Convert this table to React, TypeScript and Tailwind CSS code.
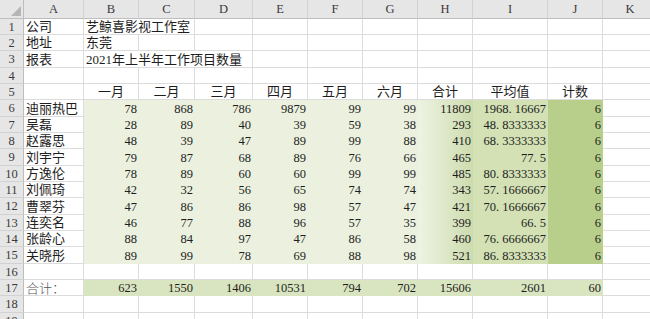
import React from "react";

const COLS =
  "grid grid-cols-[24px_60px_55px_56px_58px_55px_55px_55px_55px_75px_55px_55px]";
const HEIGHTS = ["h-[16px]", "h-[16px]", "h-[17px]"];
const FONT = "font-['Liberation_Serif','Noto_Sans_CJK_SC',serif]";
const CJK = "font-['Noto_Sans_CJK_SC',sans-serif]";

const LIGHT = "bg-[#ebf1de]";
const HGRAD = "bg-[linear-gradient(to_right,#eef3e3,#cddcae)]";
const IFILL = "bg-[#d3e1b5]";
const JFILL = "bg-[#b7cf8a]";
const TOTAL = "bg-[#d9e5c0]";

type Row = [string, number, number, number, number, number, number, number, string, number];

const DATA: Row[] = [
  ["迪丽热巴", 78, 868, 786, 9879, 99, 99, 11809, "1968.16667", 6],
  ["吴磊", 28, 89, 40, 39, 59, 38, 293, "48.8333333", 6],
  ["赵露思", 48, 39, 47, 89, 99, 88, 410, "68.3333333", 6],
  ["刘宇宁", 79, 87, 68, 89, 76, 66, 465, "77.5", 6],
  ["方逸伦", 78, 89, 60, 60, 99, 99, 485, "80.8333333", 6],
  ["刘佩琦", 42, 32, 56, 65, 74, 74, 343, "57.1666667", 6],
  ["曹翠芬", 47, 86, 86, 98, 57, 47, 421, "70.1666667", 6],
  ["连奕名", 46, 77, 88, 96, 57, 35, 399, "66.5", 6],
  ["张龄心", 88, 84, 97, 47, 86, 58, 460, "76.6666667", 6],
  ["关晓彤", 89, 99, 78, 69, 88, 98, 521, "86.8333333", 6],
];

function Num({ v }: { v: string | number }) {
  const s = String(v);
  if (!s.includes(".")) return <span>{s}</span>;
  const [a, b] = s.split(".");
  return (
    <span>
      {a}
      <span className="mr-[0.25em]">.</span>
      {b}
    </span>
  );
}

function Cell({
  children,
  align = "left",
  fill,
  span,
  kind = "num",
  extra = "",
}: {
  children?: React.ReactNode;
  align?: "left" | "center" | "right";
  fill?: string;
  span?: string;
  kind?: "num" | "cjk" | "mixed";
  extra?: string;
}) {
  const a =
    align === "right"
      ? "justify-end pr-[2px]"
      : align === "center"
      ? "justify-center"
      : "justify-start pl-[2px]";
  const f = fill ? fill : "border-r border-b border-[#dcdcdc]";
  const k =
    kind === "num"
      ? "text-[12.5px] pt-[1px]"
      : kind === "cjk"
      ? "text-[13px]"
      : "text-[13px]";
  return (
    <div
      className={`flex items-center whitespace-nowrap leading-none text-[#1e1e1e] ${a} ${f} ${k} ${
        span ?? ""
      } ${extra}`}
    >
      {children}
    </div>
  );
}

function RowNum({ n }: { n: number }) {
  return (
    <div className="flex items-center justify-center bg-[#e6e6e6] border-r border-r-[#bdbdbd] border-b border-b-[#d2d2d2] text-[12.5px] leading-none text-[#3a3a3a] pt-[1px]">
      {n}
    </div>
  );
}

function Blank({ count }: { count: number }) {
  return (
    <>
      {Array.from({ length: count }).map((_, i) => (
        <Cell key={i} />
      ))}
    </>
  );
}

export default function App() {
  const letters = ["A", "B", "C", "D", "E", "F", "G", "H", "I", "J", "K"];
  const h = (n: number) => HEIGHTS[(n - 1) % 3];

  return (
    <div className={`w-[650px] h-[319px] overflow-hidden bg-white ${FONT}`}>
      <div className="w-[658px]">
        {/* header */}
        <div className={`${COLS} h-[19px]`}>
          <div className="relative bg-[#e6e6e6] border-r border-r-[#bdbdbd] border-b border-b-[#bdbdbd]">
            <svg
              className="absolute right-[2px] bottom-[2px]"
              width="10"
              height="10"
              viewBox="0 0 10 10"
            >
              <polygon points="10,0 10,10 0,10" fill="#b5b5b5" />
            </svg>
          </div>
          {letters.map((l) => (
            <div
              key={l}
              className="flex items-center justify-center bg-[#e6e6e6] border-r border-r-[#d2d2d2] border-b border-b-[#bdbdbd] text-[12.5px] leading-none text-[#3a3a3a] pt-[1px]"
            >
              {l}
            </div>
          ))}
        </div>

        {/* row 1 */}
        <div className={`${COLS} ${h(1)}`}>
          <RowNum n={1} />
          <Cell kind="cjk">公司</Cell>
          <Cell kind="cjk" span="col-span-2">
            艺鲸喜影视工作室
          </Cell>
          <Blank count={8} />
        </div>
        {/* row 2 */}
        <div className={`${COLS} ${h(2)}`}>
          <RowNum n={2} />
          <Cell kind="cjk">地址</Cell>
          <Cell kind="cjk">东莞</Cell>
          <Blank count={9} />
        </div>
        {/* row 3 */}
        <div className={`${COLS} ${h(3)}`}>
          <RowNum n={3} />
          <Cell kind="cjk">报表</Cell>
          <Cell kind="mixed" span="col-span-3">
            2021年上半年工作项目数量
          </Cell>
          <Blank count={7} />
        </div>
        {/* row 4 */}
        <div className={`${COLS} ${h(4)}`}>
          <RowNum n={4} />
          <Blank count={11} />
        </div>
        {/* row 5 */}
        <div className={`${COLS} ${h(5)}`}>
          <RowNum n={5} />
          <Cell />
          {["一月", "二月", "三月", "四月", "五月", "六月", "合计", "平均值", "计数"].map(
            (t) => (
              <Cell key={t} kind="cjk" align="center">
                {t}
              </Cell>
            )
          )}
          <Cell />
        </div>

        {/* data rows */}
        {DATA.map((r, i) => {
          const n = 6 + i;
          return (
            <div key={n} className={`${COLS} ${h(n)}`}>
              <RowNum n={n} />
              <Cell kind="cjk" extra="text-[13.5px]">
                {r[0]}
              </Cell>
              {[r[1], r[2], r[3], r[4], r[5], r[6]].map((v, j) => (
                <Cell key={j} align="right" fill={LIGHT}>
                  <Num v={v} />
                </Cell>
              ))}
              <Cell align="right" fill={HGRAD}>
                <Num v={r[7]} />
              </Cell>
              <Cell align="right" fill={IFILL}>
                <Num v={r[8]} />
              </Cell>
              <Cell align="right" fill={JFILL}>
                <Num v={r[9]} />
              </Cell>
              <Cell />
            </div>
          );
        })}

        {/* row 16 */}
        <div className={`${COLS} ${h(16)}`}>
          <RowNum n={16} />
          <Blank count={11} />
        </div>

        {/* row 17 */}
        <div className={`${COLS} ${h(17)}`}>
          <RowNum n={17} />
          <Cell kind="cjk" extra={`${CJK} text-[#555] font-light`}>
            合计：
          </Cell>
          {[623, 1550, 1406, 10531, 794, 702, 15606, 2601, 60].map((v, j) => (
            <Cell key={j} align="right" fill={TOTAL}>
              <Num v={v} />
            </Cell>
          ))}
          <Cell />
        </div>

        {/* row 18 */}
        <div className={`${COLS} ${h(18)}`}>
          <RowNum n={18} />
          <Blank count={11} />
        </div>
        {/* row 19 */}
        <div className={`${COLS} ${h(19)}`}>
          <RowNum n={19} />
          <Blank count={11} />
        </div>
      </div>
    </div>
  );
}
